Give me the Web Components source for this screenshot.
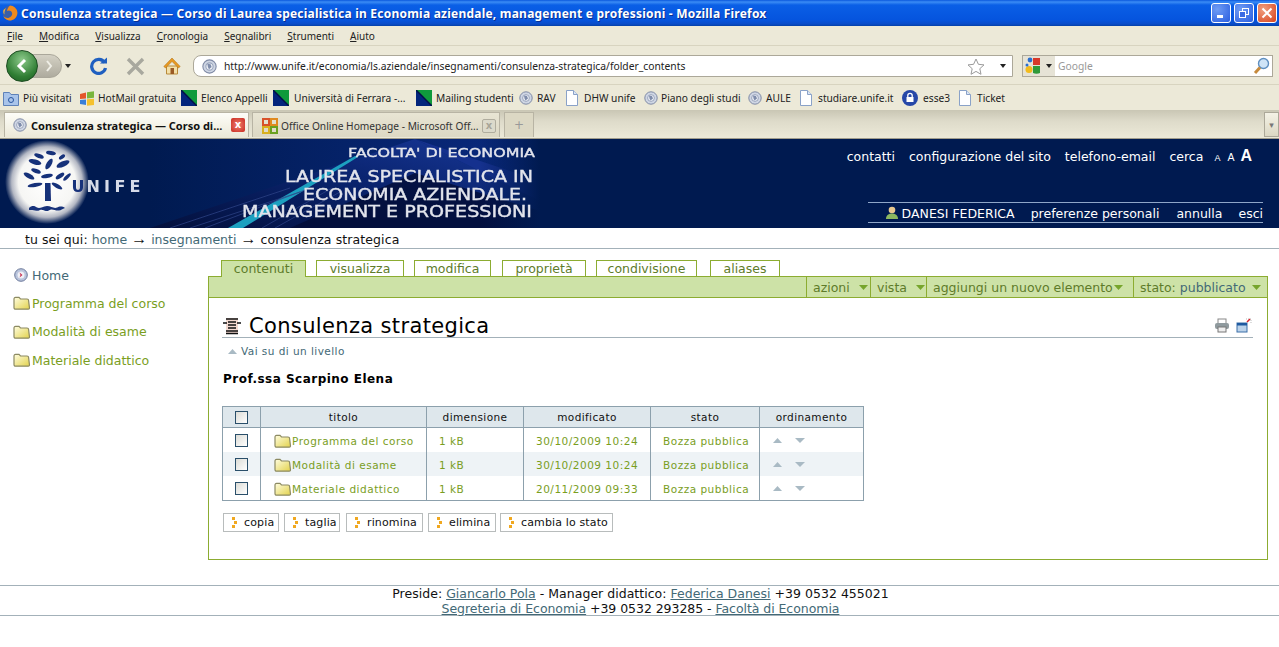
<!DOCTYPE html>
<html lang="it"><head><meta charset="utf-8"><title>Consulenza strategica</title>
<style>
html,body{margin:0;padding:0;background:#fff;overflow:hidden}
body{font-family:"DejaVu Sans",sans-serif;width:1279px;height:647px}
</style></head><body>
<x-titlebar>Consulenza strategica — Corso di Laurea specialistica in Economia aziendale, management e professioni - Mozilla Firefox</x-titlebar>
<x-menubar></x-menubar>
<x-navbar></x-navbar>
<x-bookmarks></x-bookmarks>
<x-tabstrip></x-tabstrip>
<x-banner></x-banner>
<x-crumbs></x-crumbs>
<x-layout>
  <x-sidebar slot="side"></x-sidebar>
  <x-content slot="main"></x-content>
</x-layout>
<x-footer></x-footer>
<script>
const I={
 globe:(s=14)=>`<svg width="${s}" height="${s}" viewBox="0 0 14 14"><circle cx="7" cy="7" r="6.2" fill="#cfd6e4" stroke="#7f8aa5"/><circle cx="7" cy="7" r="3.4" fill="#eef1f6" stroke="#9aa5bd"/><path d="M5 4.5l3 .5 1 2.5-2.5 2-1-2z" fill="#7e8cab"/></svg>`,
 homeglobe:()=>`<svg width="14" height="14" viewBox="0 0 14 14"><circle cx="7" cy="7" r="6.3" fill="#b9c4dc" stroke="#6e7b9c"/><circle cx="7" cy="7" r="3.5" fill="#eef0f6"/><path d="M5.5 4.5l3 2.5-3 2.5 1-2.5z" fill="#c83050"/></svg>`,
 page:()=>`<svg width="14" height="16" viewBox="0 0 14 16"><path d="M1.5.5h7l4 4v11h-11z" fill="#fff" stroke="#8aa2c8"/><path d="M8.5.5v4h4" fill="#dce6f5" stroke="#8aa2c8"/></svg>`,
 flag:()=>`<svg width="16" height="16" viewBox="0 0 16 16"><rect width="16" height="16" fill="#03257c"/><path d="M0 0h16v16z" fill="#0f9a3c"/><path d="M0 0l16 16" stroke="#021048" stroke-width="1.5"/></svg>`,
 folder:()=>`<svg width="18" height="14" viewBox="0 0 18 14"><defs><linearGradient id="f" x1="0" y1="0" x2="1" y2="1"><stop offset="0" stop-color="#fffde0"/><stop offset="1" stop-color="#e2d24c"/></linearGradient></defs><path d="M1 11.5V3c0-1 .6-1.6 1.5-1.6H6L7.5 3H14c1 0 1.600.6 1.600 1.600L16.500 12c0 .8-.5 1.200-1.200 1.200H2.600C1.600 13.200 1 12.600 1 11.500z" fill="url(#f)" stroke="#8c8a62" stroke-width="1.200"/></svg>`,
 orange:()=>`<svg width="5" height="11" viewBox="0 0 5 11"><path d="M0 0h3v3H0zM2 4h3v3H2zM0 8h3v3H0z" fill="#f0a820"/></svg>`,
 up:()=>`<svg width="9" height="5" viewBox="0 0 9 5"><path d="M4.500 0L9 5H0z" fill="#a9bac4"/></svg>`,
 down:()=>`<svg width="10" height="5" viewBox="0 0 10 5"><path d="M0 0h10L5 5z" fill="#a9bac4"/></svg>`,
 drop:()=>`<svg width="9" height="5" viewBox="0 0 9 5"><path d="M0 0h9L4.500 5z" fill="#76a52c"/></svg>`
};
function def(name,css,html){
 customElements.define(name,class extends HTMLElement{
  constructor(){super();const r=this.attachShadow({mode:"open"});
   r.innerHTML=`<style>${css}</style>${html}`;}
 });
}
const chromeFont=`font-family:"Noto Sans","DejaVu Sans",sans-serif;`;

def("x-titlebar",`:host{display:flex;align-items:center;height:26px;box-sizing:border-box;padding:0 1px 0 2px;background:linear-gradient(#0a58dd 0,#3b8cf5 2px,#0a5fe6 5px,#0554de 20px,#0a4cc8 24px,#0340a8 26px);color:#fff;${chromeFont}}
 .t{flex:1;margin-left:3px;font-weight:700;font-size:12px;letter-spacing:.22px;white-space:nowrap;overflow:hidden;text-shadow:1px 1px 0 #0a2f90}
 .b{display:flex;gap:3px;margin-right:1px}
 .w{width:20px;height:20px;border:1px solid #fff;border-radius:3px;box-sizing:border-box;background:radial-gradient(circle at 30% 30%,#6f9cf4,#2a5ee0);display:flex;align-items:center;justify-content:center}
 .c{background:radial-gradient(circle at 30% 30%,#f0a080,#d8421c)}`,
 `<svg width="16" height="16" viewBox="0 0 16 16"><circle cx="8" cy="8" r="7.400" fill="#3a5fa8"/><path d="M8 .6a7.400 7.400 0 1 1-7 9.800c1 1.600 3.500 3 6 2.300 2.600-.7 3.600-3 3-5C9.400 5.500 6.500 5 5 6c.4-2 1-3.600 3-5.400z" fill="#ef8a1e"/><path d="M1.500 5C1 7 1.500 9 2.500 9.500 2 7 3 5 4 3z" fill="#f6b73c"/></svg>
 <div class="t"><slot></slot></div>
 <div class="b"><div class="w"><svg width="12" height="12"><rect x="2" y="8" width="6" height="3" fill="#fff"/></svg></div>
 <div class="w"><svg width="12" height="12" fill="none" stroke="#fff"><rect x="4.500" y="1.500" width="6" height="6"/><rect x="1.500" y="4.500" width="6" height="6" fill="#3a6be4"/></svg></div>
 <div class="w c"><svg width="12" height="12" stroke="#fff" stroke-width="2"><path d="M1.500 1.500l9 9M10.500 1.500l-9 9"/></svg></div></div>`);

def("x-menubar",`:host{display:flex;height:20px;box-sizing:border-box;padding:1px 0 0 7px;gap:16px;align-items:center;background:#ece9d8;border-bottom:1px solid #d8d4c0;${chromeFont}font-size:10px;color:#222}
 u{text-decoration:underline;text-underline-offset:1px}`,
 ["File","Modifica","Visualizza","Cronologia","Segnalibri","Strumenti","Aiuto"].map(m=>`<span><u>${m[0]}</u>${m.slice(1)}</span>`).join(""));

def("x-navbar",`:host{display:flex;align-items:center;height:39px;box-sizing:border-box;background:#ece9d8;border-bottom:1px solid #d8d4c0;padding:2px 0 0 6px;${chromeFont}}
 .pill{position:relative;width:68px;height:32px;display:flex;align-items:center}
 .back{width:32px;height:32px;border-radius:50%;background:radial-gradient(circle at 50% 30%,#8cc98a,#2f7d33 65%,#1f5c24);border:1px solid #1d4d22;box-sizing:border-box;display:flex;align-items:center;justify-content:center;position:relative;z-index:1;flex:none}
 .fwd{width:32px;height:24px;margin-left:-8px;background:linear-gradient(#d4d1c4,#aeab9e);border:1px solid #aaa79a;border-radius:0 12px 12px 0;box-sizing:border-box;display:flex;align-items:center;justify-content:center;padding-left:6px;flex:none}
 .tri{margin-left:3px;width:0;height:0;border:3px solid transparent;border-top:4px solid #222;border-bottom:0}
 .ic{margin-left:18px;display:flex}
 .url{margin-left:12px;width:820px;height:22px;box-sizing:border-box;background:#fff;border:1px solid #aca899;border-radius:8px 0 0 8px;display:flex;align-items:center;padding:0 6px 0 8px;font-size:10.300px;color:#222;gap:7px}
 .url span{flex:1;white-space:nowrap}
 .search{margin-left:9px;width:251px;height:22px;box-sizing:border-box;background:#fff;border:1px solid #aca899;display:flex;align-items:center;font-size:10.300px;color:#999}
 .g{width:32px;height:100%;background:#e6e3d6;display:flex;align-items:center;padding-left:2px;box-sizing:border-box;gap:2px;flex:none}
 .search span{flex:1;padding-left:3px}`,
 `<div class="pill"><div class="back"><svg width="14" height="16" viewBox="0 0 14 16" fill="none" stroke="#fff" stroke-width="3"><path d="M10 2L4 8l6 6"/></svg></div><div class="fwd"><svg width="8" height="12" viewBox="0 0 8 12" fill="none" stroke="#efeee6" stroke-width="2"><path d="M2 1l4 5-4 5"/></svg></div><div class="tri"></div></div>
 <div class="ic" style="margin-left:16px"><svg width="18" height="18" viewBox="0 0 18 18" fill="none"><path d="M14.500 5.500A7 7 0 1 0 15.500 11" stroke="#1f5fc0" stroke-width="3.200"/><path d="M10 6.500h7v-6z" fill="#1f5fc0"/></svg></div>
 <div class="ic" style="margin-left:18px"><svg width="19" height="19" viewBox="0 0 19 19" stroke="#a8a89e" stroke-width="3.400"><path d="M2 2l15 15M17 2L2 17"/></svg></div>
 <div class="ic"><svg width="18" height="18" viewBox="0 0 18 18"><path d="M3.500 9v8h11V9z" fill="#f4e0a8" stroke="#b88a3a"/><rect x="7.500" y="11" width="3.500" height="6" fill="#9a5a24"/><path d="M9 1L.8 9.500 2.500 11 9 4.500 15.500 11l1.700-1.500z" fill="#e89a22" stroke="#a86a14" stroke-width=".5"/></svg></div>
 <div class="url">${I.globe(15)}<span>http://www.unife.it/economia/ls.aziendale/insegnamenti/consulenza-strategica/folder_contents</span><svg width="18" height="17" viewBox="0 0 18 17"><path d="M9 1l2.400 5.300 5.600.6-4.200 3.800 1.200 5.600L9 13.400l-5 2.900 1.200-5.600L1 6.900l5.600-.6z" fill="#fff" stroke="#9a9a9a"/></svg><div class="tri" style="margin-left:8px"></div></div>
 <div class="search"><div class="g"><svg width="16" height="18" viewBox="0 0 16 18"><circle cx="5" cy="3" r="2.400" fill="#2a6fd0"/><rect x="8" y="1" width="7" height="7" fill="#d8392a"/><path d="M8 9h7v7c-2 1-5 1-7 0z" fill="#2f9a3a"/><circle cx="4" cy="12.500" r="3.500" fill="#f3bb1c"/><circle cx="2" cy="8" r="1.500" fill="#2a6fd0"/></svg><div class="tri"></div></div><span>Google</span><svg style="margin-right:2px" width="17" height="18" viewBox="0 0 17 18"><circle cx="10.500" cy="6.500" r="5" fill="#cfe4f7" stroke="#5f8fc0" stroke-width="1.400"/><path d="M7 10.500L2 16" stroke="#c68a3c" stroke-width="3"/></svg></div>`);

def("x-bm",`:host{display:flex;align-items:center;white-space:nowrap;flex:none}
 .i{display:flex;flex:none;width:var(--iw)}`,`<div class="i"><slot name="i"></slot></div><slot></slot>`);
const bms=[["blue","Più visitati",3,23],["win","HotMail gratuita",79,98],["flag","Elenco Appelli",181,201],["flag","Università di Ferrara -...",273,294],["flag","Mailing studenti",416,436],["globe","RAV",519,537],["page","DHW unife",565,584],["globe","Piano degli studi",644,661],["globe","AULE",748,766],["page","studiare.unife.it",799,818],["lock","esse3",902,923],["page","Ticket",958,977]];
const bmIcon={blue:`<svg width="16" height="15" viewBox="0 0 16 15"><path d="M.5 1.500h6l1.500 2h7.500v11H.5z" fill="#a9c4ea" stroke="#5f82b8"/><circle cx="8" cy="9" r="2.500" fill="none" stroke="#2a56a0"/></svg>`,
 win:`<svg width="16" height="15" viewBox="0 0 16 15"><path d="M1 3l6-1.500v6L1 8z" fill="#e4572a"/><path d="M8 1.300l7-1v6.500l-7 .6z" fill="#7ab53c"/><path d="M1 9l6-.6V14l-6-1z" fill="#3a7fd8"/><path d="M8 8.300l7-.5V14l-7 .7z" fill="#f5c12e"/></svg>`,
 flag:I.flag(),globe:I.globe(14),page:I.page(),
 lock:`<svg width="16" height="16" viewBox="0 0 16 16"><circle cx="8" cy="8" r="8" fill="#2748a8"/><rect x="4.500" y="7" width="7" height="5" fill="#fff"/><path d="M5.800 7V5.500a2.200 2.200 0 0 1 4.400 0V7" fill="none" stroke="#fff" stroke-width="1.300"/></svg>`};
def("x-bookmarks",`:host{display:flex;align-items:center;height:25px;box-sizing:border-box;padding:1px 0 0 3px;background:#ece9d8;${chromeFont}font-size:10.200px;color:#222}`,
 bms.map((b,i)=>{const next=bms[i+1]?bms[i+1][2]:1030;return `<x-bm style="width:${next-b[2]}px;--iw:${b[3]-b[2]}px"><span slot="i" style="display:flex">${bmIcon[b[0]]}</span>${b[1]}</x-bm>`}).join(""));

def("x-browsertab",`:host{display:flex;align-items:center;box-sizing:border-box;height:25px;border:1px solid #b8b4a4;border-bottom:0;background:linear-gradient(#e8e5d4,#dcd8c4);font-size:10.200px;color:#333;padding:1px 3px 0 9px;gap:3px;white-space:nowrap;overflow:hidden;flex:none}
 :host([active]){background:linear-gradient(#fdfdf8,#ece9d8);font-weight:700;font-size:11px;color:#111;padding:0 3px 0 8px;gap:4px}
 span{flex:1;overflow:hidden}`,`<slot name="i"></slot><span><slot></slot></span><slot name="x"></slot>`);
def("x-tabstrip",`:host{display:flex;align-items:flex-end;height:29px;box-sizing:border-box;padding:0 0 1px 4px;background:linear-gradient(#c9c6b4,#dedbca 40%,#ece9d8);border-bottom:1px solid #a09c8c;${chromeFont}}
 .x{width:14px;height:14px;border-radius:2px;background:radial-gradient(#f08070,#c82a20);color:#fff;font:700 10px/14px "DejaVu Sans";text-align:center;flex:none}
 .x2{background:#dcdacb;border:1px solid #b0ad9e;color:#a8a598;box-sizing:border-box;line-height:12px}
 .plus{width:30px;margin-left:4px;height:25px;box-sizing:border-box;border:1px solid #b8b4a4;border-bottom:0;background:#dcd8c4;color:#999;font:12px/24px "DejaVu Sans";text-align:center}
 .sp{flex:1}.dd{width:15px;height:25px;box-sizing:border-box;border:1px solid #aca899;background:linear-gradient(#f4f2e6,#dcd8c4);color:#777;font:9px/24px "DejaVu Sans";text-align:center}`,
 `<x-browsertab active style="width:245px"><span slot="i" style="display:flex;flex:none">${I.globe(14)}</span>Consulenza strategica — Corso di...<div slot="x" class="x">x</div></x-browsertab>
 <x-browsertab style="width:248px;margin-left:3px"><svg slot="i" width="16" height="16" viewBox="0 0 16 16"><rect x="1" y="1" width="6" height="6" fill="none" stroke="#d8522a" stroke-width="2"/><rect x="9" y="1" width="6" height="6" fill="none" stroke="#e08a20" stroke-width="2"/><rect x="1" y="9" width="6" height="6" fill="none" stroke="#d8b020" stroke-width="2"/><rect x="9" y="9" width="6" height="6" fill="none" stroke="#6aa020" stroke-width="2"/></svg>Office Online Homepage - Microsoft Off...<div slot="x" class="x x2">x</div></x-browsertab>
 <div class="plus">+</div><div class="sp"></div><div class="dd">▾</div>`);

def("x-banner",`:host{display:flex;height:89px;background:#001a50;overflow:hidden;color:#fff;font-size:12.500px}
 .art{width:540px;flex:none;display:block}
 .r{flex:1;display:flex;flex-direction:column;align-items:flex-end;padding-right:16px;box-sizing:border-box}
 .top{display:flex;align-items:baseline;margin-top:8px;height:20px;margin-right:11px}
 .top span{margin-left:14px;white-space:nowrap}
 .sz{display:flex;align-items:baseline;font-family:"Liberation Sans",sans-serif;margin-left:11px}
 .user{margin-top:35px;width:395px;height:21px;box-sizing:border-box;border-top:1px solid #8fa6c8;border-bottom:1px solid #8fa6c8;padding-top:1px;display:flex;align-items:center;justify-content:flex-end;white-space:nowrap}`,
 `<svg class="art" width="540" height="89" viewBox="0 0 540 89"><defs>
 <radialGradient id="ball"><stop offset="0" stop-color="#fff"/><stop offset=".68" stop-color="#f6f6f4"/><stop offset=".84" stop-color="#b4b8c4"/><stop offset="1" stop-color="#001a50"/></radialGradient>
 <linearGradient id="lf" x1="0" y1="1" x2="1" y2="0"><stop offset="0" stop-color="#03103c"/><stop offset=".55" stop-color="#0a2470"/><stop offset="1" stop-color="#1a3a9c"/></linearGradient>
 <linearGradient id="pan" x1="0" y1="0" x2="1" y2="0"><stop offset="0" stop-color="#001a50"/><stop offset="1" stop-color="#0a2a80"/></linearGradient>
 <linearGradient id="fade" x1="0" y1="0" x2="1" y2="0"><stop offset="0" stop-color="#001a50" stop-opacity="0"/><stop offset="1" stop-color="#001a50"/></linearGradient>
 <filter id="s" x="-5%" y="-5%" width="110%" height="110%"><feGaussianBlur stdDeviation=".35"/></filter></defs>
 <rect x="150" width="390" height="89" fill="url(#pan)"/>
 <path d="M150 89L415 0l125 62v27z" fill="url(#lf)"/>
 <path d="M415 0l125 62v-20z" fill="#15318e"/>
 <path d="M290 89l125-55 125 38v17z" fill="#030d36" opacity=".8"/>
 <rect x="480" width="60" height="89" fill="url(#fade)"/>
 <path d="M228 89L355 17l3 1L243 89z" fill="#1ea0c0" filter="url(#s)"/>
 <path d="M170 89l120-40M190 89l110-36M205 89l100-38M262 89l70-40M275 89l65-36" stroke="#31468a" stroke-width=".7"/>
 <circle cx="47" cy="43" r="42" fill="url(#ball)"/>
 <g fill="#18307a" filter="url(#s)">
 <ellipse cx="35" cy="23" rx="6.500" ry="2.500" transform="rotate(15 35 23)"/><ellipse cx="39" cy="17" rx="5" ry="2" transform="rotate(20 39 17)"/><ellipse cx="51" cy="14" rx="5" ry="2" transform="rotate(10 51 14)"/><ellipse cx="63" cy="25" rx="7" ry="2.700" transform="rotate(-25 63 25)"/><ellipse cx="62" cy="18" rx="3.500" ry="1.800" transform="rotate(-35 62 18)"/><ellipse cx="49" cy="25" rx="6" ry="2.500" transform="rotate(-60 49 25)"/><ellipse cx="36" cy="32" rx="5" ry="2" transform="rotate(20 36 32)"/><ellipse cx="29" cy="37" rx="6" ry="2.300" transform="rotate(30 29 37)"/><ellipse cx="47" cy="37" rx="6" ry="2" transform="rotate(-10 47 37)"/><ellipse cx="60" cy="37" rx="5" ry="2" transform="rotate(-35 60 37)"/><ellipse cx="67" cy="38" rx="5" ry="1.700" transform="rotate(-45 67 38)"/><ellipse cx="35" cy="46" rx="7.500" ry="2" transform="rotate(-10 35 46)"/><ellipse cx="57" cy="47" rx="6" ry="2" transform="rotate(30 57 47)"/>
 <path d="M45 44h5.500l.5 18h-6z"/><path d="M29 69c3-3 6-2 8-.5 3 1.500 5-1 10-1.500 4 0 7 3 10 1.500 2-1 5-2 8 .5-3 1-4 3-7 2.500-3 0-5-1.500-7-1s-3 2-5 1.500-4-2-6-1-3 1-5 .5-3-.5-6-.5z"/></g>
 <g font-family="DejaVu Sans,sans-serif" filter="url(#s)">
 <text font-size="16" font-weight="700" y="52.500"><tspan x="71.500" fill="#18307a">U</tspan><tspan x="86.500 104 114.500 129.500" fill="#d6dbe8">NIFE</tspan></text>
 <g fill="#e2e4ec" stroke="#e2e4ec" stroke-width=".35">
 <text x="348" y="17.500" font-size="11.500" textLength="187" lengthAdjust="spacingAndGlyphs">FACOLTA' DI ECONOMIA</text>
 <text x="285" y="42.500" font-size="15" textLength="248" lengthAdjust="spacingAndGlyphs">LAUREA SPECIALISTICA IN</text>
 <text x="303" y="61" font-size="15" textLength="224" lengthAdjust="spacingAndGlyphs">ECONOMIA AZIENDALE.</text>
 <text x="242" y="78" font-size="15" textLength="290" lengthAdjust="spacingAndGlyphs">MANAGEMENT E PROFESSIONI</text></g></g></svg>
 <div class="r"><div class="top"><span>contatti</span><span>configurazione del sito</span><span>telefono-email</span><span>cerca</span><div class="sz"><span style="font-size:9px;margin:0">A</span><span style="font-size:10.500px;margin-left:7px">A</span><span style="font-size:16px;font-weight:700;margin-left:6px">A</span></div></div>
 <div class="user"><svg width="16" height="14" viewBox="0 0 16 14" style="margin-right:2px"><circle cx="8" cy="4" r="3.300" fill="#e8c890"/><path d="M2 13c0-4 3-5.500 6-5.500s6 1.500 6 5.500z" fill="#8cb860"/></svg><span>DANESI FEDERICA</span><span style="margin-left:16px">preferenze personali</span><span style="margin-left:17px">annulla</span><span style="margin-left:16px">esci</span></div></div>`);

def("x-crumbs",`:host{display:flex;align-items:baseline;height:21px;box-sizing:border-box;padding:4px 0 0 25px;border-bottom:1px solid #a3b1b9;font-size:12.500px;color:#111;white-space:pre}
 a{color:#436976}
 .arr{font-family:"Liberation Sans",sans-serif;font-size:16px;width:16px;margin:0 4px;line-height:10px}`,`<span style="letter-spacing:.06px">tu sei qui: </span><a>home</a><span class="arr">→</span><a>insegnamenti</a><span class="arr">→</span><span style="letter-spacing:.1px">consulenza strategica</span>`);

def("x-layout",`:host{display:flex;height:336px;box-sizing:border-box}
 .s{width:208px;flex:none}.m{width:1060px;flex:none}`,`<div class="s"><slot name="side"></slot></div><div class="m"><slot name="main"></slot></div>`);

def("x-side-item",`:host{display:flex;align-items:center;height:28.300px;padding-left:13px;font-size:12.500px;color:#7a9e1e;white-space:nowrap}
 :host([home]){color:#436976;padding-left:14px}
 :host([home]) .i{width:18px}
 .i{display:flex;width:19px;flex:none}`,`<div class="i"><slot name="i"></slot></div><slot></slot>`);
def("x-sidebar",`:host{display:block;padding-top:12px}`,
 `<x-side-item home><span slot="i" style="display:flex">${I.homeglobe()}</span>Home</x-side-item>`+
 ["Programma del corso","Modalità di esame","Materiale didattico"].map(t=>`<x-side-item><span slot="i" style="display:flex">${I.folder()}</span>${t}</x-side-item>`).join(""));

def("x-tab",`:host{display:block;height:16px;box-sizing:border-box;border:1px solid #8cac31;border-bottom:0;background:#fff;text-align:center;font-size:12.500px;line-height:16px;color:#5e7b2a}
 :host([active]){background:#cde2a7;height:17px;margin-bottom:-1px;position:relative;z-index:1}`,`<slot></slot>`);
def("x-act",`:host{display:flex;align-items:center;height:100%;box-sizing:border-box;border-left:1px solid #8cac31;font-size:12.500px;color:#5e7b2a;white-space:nowrap}`,`<slot></slot>`);
def("x-file-btn",`:host{display:inline-flex;align-items:center;height:19px;box-sizing:border-box;border:1px solid #b8bcbc;background:#fff;font-size:11px;letter-spacing:.14px;color:#111;padding-left:8px;gap:7px;white-space:nowrap}`,`${I.orange()}<slot></slot>`);
def("x-checkbox",`:host{display:inline-block;width:13px;height:13px;box-sizing:border-box;border:1px solid #2a4f6a;background:linear-gradient(135deg,#dcdcd6,#fff);vertical-align:middle}`,``);

def("x-content",`:host{display:block;padding-top:12px;width:1060px}
 .tabs{display:flex;padding-left:13px;height:15px;align-items:flex-end}
 .box{border:1px solid #8cac31;height:284px;box-sizing:border-box;background:#fff}
 .bar{height:20px;background:#cde2a7;border-bottom:1px solid #8cac31;display:flex;justify-content:flex-end;box-sizing:content-box}
 .in{padding:0 14px 0 13px}
 h1{display:flex;align-items:center;margin:16px 0 0;height:23px;border-bottom:1px solid #a3b1b9;font-size:21px;letter-spacing:.35px;font-weight:400;color:#000;line-height:23px;padding:0 1px}
 h1 .ti{margin-left:8px;flex:1;white-space:nowrap;padding-top:2px}
 h1 svg{flex:none}
 .up{display:flex;align-items:center;height:14px;margin-top:6px;padding-left:6px;font-size:10.500px;letter-spacing:.45px;color:#436976;gap:4px}
 .prof{font-size:12px;letter-spacing:.48px;font-weight:700;color:#000;margin-top:14px;margin-left:1px;height:15px;line-height:15px}
 table{border-collapse:collapse;table-layout:fixed;width:641px;margin-top:19px;font-size:10.500px;letter-spacing:.5px}
 th{background:#dee7ec;font-weight:400;color:#111;height:20px;border:1px solid #8ca0ac;padding:0;letter-spacing:.4px}
 td{height:23px;color:#7a9e1e;padding:1px 0 0;border-left:1px solid #8ca0ac;border-right:1px solid #8ca0ac}
 td.c{height:24px;padding:0}
 tr:last-child td{border-bottom:1px solid #8ca0ac}
 tr.e td{background:#eef3f6}
 .c{text-align:center}td.p{padding-left:12px}
 .tt{display:flex;align-items:center;padding-left:13px}
 .arr{display:flex;gap:13px;align-items:center;padding-left:13px}
 .btns{display:flex;margin-top:12px;margin-left:1px}`,
 `<div class="tabs"><x-tab active style="width:85px">contenuti</x-tab><x-tab style="width:88px;margin-left:10px">visualizza</x-tab><x-tab style="width:77px;margin-left:10px">modifica</x-tab><x-tab style="width:84px;margin-left:11px">proprietà</x-tab><x-tab style="width:101px;margin-left:10px">condivisione</x-tab><x-tab style="width:70px;margin-left:13px">aliases</x-tab></div>
 <div class="box"><div class="bar">
 <x-act style="width:64px;padding-left:6px">azioni<span style="margin-left:9px;display:flex">${I.drop()}</span></x-act>
 <x-act style="width:56px;padding-left:6px">vista<span style="margin-left:9px;display:flex">${I.drop()}</span></x-act>
 <x-act style="width:207px;padding-left:6px">aggiungi un nuovo elemento<span style="margin-left:1px;display:flex">${I.drop()}</span></x-act>
 <x-act style="width:134px;padding-left:6px">stato:&nbsp;<span style="color:#436976">pubblicato</span><span style="margin-left:6px;display:flex">${I.drop()}</span></x-act></div>
 <div class="in">
 <h1><svg width="18" height="18" viewBox="0 0 18 18"><rect x="3" y="1" width="12" height="16" fill="#f3d9d0"/><path d="M3 2h12M5 5h8M0 6h4M14 6h4M5 8h8M5 11h8M3 14h12M3 16.500h12" stroke="#111" stroke-width="1.400"/></svg><span class="ti">Consulenza strategica</span>
 <svg width="16" height="15" viewBox="0 0 16 15" style="margin-right:6px"><rect x="4" y="1" width="8" height="5" fill="#fff" stroke="#888"/><rect x="1" y="5" width="14" height="6" rx="2" fill="#8f9a9e"/><rect x="4" y="9" width="8" height="5" fill="#eee" stroke="#777"/></svg>
 <svg width="16" height="15" viewBox="0 0 16 15"><rect x="1" y="5" width="10" height="9" fill="#bcd3ea" stroke="#3a6ea8"/><rect x="1" y="5" width="10" height="2.500" fill="#1f5aa0"/><path d="M10 1h5v5" fill="none" stroke="#bbb" stroke-dasharray="1 1"/><path d="M11 4l3-3" stroke="#d8202a" stroke-width="1.500"/></svg></h1>
 <div class="up">${I.up()}<span>Vai su di un livello</span></div>
 <div class="prof">Prof.ssa Scarpino Elena</div>
 <table><colgroup><col style="width:38px"><col style="width:166px"><col style="width:97px"><col style="width:127px"><col style="width:109px"><col style="width:104px"></colgroup>
 <tr><th><x-checkbox></x-checkbox></th><th>titolo</th><th>dimensione</th><th>modificato</th><th>stato</th><th>ordinamento</th></tr>
 ${[["Programma del corso","30/10/2009 10:24"],["Modalità di esame","30/10/2009 10:24"],["Materiale didattico","20/11/2009 09:33"]].map((r,i)=>`<tr class="${i==1?'e':''}"><td class="c"><x-checkbox></x-checkbox></td><td><div class="tt">${I.folder()}${r[0]}</div></td><td class="p">1 kB</td><td class="p">${r[1]}</td><td class="p">Bozza pubblica</td><td><div class="arr">${I.up()}${I.down()}</div></td></tr>`).join("")}
 </table>
 <div class="btns"><x-file-btn style="width:56px">copia</x-file-btn><x-file-btn style="width:56px;margin-left:5px">taglia</x-file-btn><x-file-btn style="width:77px;margin-left:6px">rinomina</x-file-btn><x-file-btn style="width:68px;margin-left:5px">elimina</x-file-btn><x-file-btn style="width:113px;margin-left:4px">cambia lo stato</x-file-btn></div>
 </div></div>`);

def("x-footer",`:host{display:block;height:31px;box-sizing:border-box;border-top:1px solid #a3b1b9;border-bottom:1px solid #a3b1b9;padding-left:2px;text-align:center;font-size:12.500px;letter-spacing:.02px;line-height:15px;color:#111;white-space:nowrap}
 a{color:#436976;text-decoration:underline}
 .l2{letter-spacing:-.05px}`,
 `Preside: <a>Giancarlo Pola</a> - Manager didattico: <a>Federica Danesi</a> +39 0532 455021<br><span class="l2"><a>Segreteria di Economia</a> +39 0532 293285 - <a>Facoltà di Economia</a></span>`);
</script></body></html>
